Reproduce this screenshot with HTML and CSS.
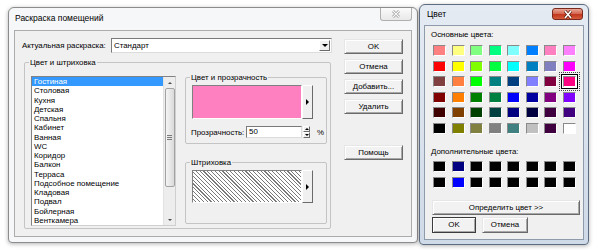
FILE: index.html
```html
<!DOCTYPE html>
<html lang="ru">
<head>
  <meta charset="UTF-8" />
  <title>Раскраска помещений</title>
  <link rel="stylesheet" href="styles.css">
</head>
<body>
  <div class="window room-dialog">
    <div class="titlebar">
      <span class="title">Раскраска помещений</span>
      <span class="close inactive">
        <svg width="10" height="8" viewBox="0 0 10 8"><path d="M2 1L8 7M8 1L2 7" stroke="#9a9a9a" stroke-width="2.6" fill="none"/><path d="M2 1L8 7M8 1L2 7" stroke="#fafafa" stroke-width="1.1" fill="none"/></svg>
      </span>
    </div>
    <div class="client">
      <div class="main">
        <div class="top-row">
          <label class="lbl">Актуальная раскраска:</label>
          <div class="combo">
            <span class="combo-text">Стандарт</span>
            <span class="combo-btn raised"><i class="tri-down"></i></span>
          </div>
        </div>
        <div class="group big">
          <span class="group-title">Цвет и штриховка</span>
          <div class="listbox">
            <ul class="items">
              <li class="sel">Гостиная</li>
              <li>Столовая</li>
              <li>Кухня</li>
              <li>Детская</li>
              <li>Спальня</li>
              <li>Кабинет</li>
              <li>Ванная</li>
              <li>WC</li>
              <li>Коридор</li>
              <li>Балкон</li>
              <li>Терраса</li>
              <li>Подсобное помещение</li>
              <li>Кладовая</li>
              <li>Подвал</li>
              <li>Бойлерная</li>
              <li>Венткамера</li>
            </ul>
            <div class="scrollbar">
              <span class="sb-btn"><i class="sb-up"></i></span>
              <span class="thumb"><i class="grip"></i></span>
              <span class="sb-spacer"></span>
              <span class="sb-btn"><i class="sb-down"></i></span>
            </div>
          </div>
          <div class="side">
            <div class="group sub color-group">
              <span class="group-title">Цвет и прозрачность</span>
              <div class="picker">
                <span class="preview pink"></span>
                <span class="arrow-btn raised"><i class="tri-right"></i></span>
              </div>
              <div class="opacity">
                <span class="op-label">Прозрачность:</span>
                <span class="edit">50</span>
                <span class="spin">
                  <span class="spin-half raised"><i class="spin-up"></i></span>
                  <span class="spin-half raised"><i class="spin-down"></i></span>
                </span>
                <span class="pct">%</span>
              </div>
            </div>
            <div class="group sub hatch-group">
              <span class="group-title">Штриховка</span>
              <div class="picker">
                <span class="preview hatching"></span>
                <span class="arrow-btn raised"><i class="tri-right"></i></span>
              </div>
            </div>
          </div>
        </div>
      </div>
      <div class="buttons">
        <button class="btn">OK</button>
        <button class="btn">Отмена</button>
        <button class="btn">Добавить...</button>
        <button class="btn">Удалить</button>
        <button class="btn help">Помощь</button>
      </div>
    </div>
  </div>

  <div class="window color-dialog">
    <div class="titlebar">
      <span class="title">Цвет</span>
      <span class="close active">
        <svg width="12" height="9" viewBox="0 0 12 9"><path d="M3 1L9 8M9 1L3 8" stroke="#5a1a10" stroke-width="3" fill="none"/><path d="M3 1L9 8M9 1L3 8" stroke="#fff" stroke-width="1.6" fill="none"/></svg>
      </span>
    </div>
    <div class="color-client">
      <div class="cap">Основные цвета:</div>
      <div class="swatches basic">
        <span style="background:#ff8080"></span><span style="background:#ffff80"></span><span style="background:#80ff80"></span><span style="background:#00ff80"></span><span style="background:#80ffff"></span><span style="background:#0080ff"></span><span style="background:#ff80c0"></span><span style="background:#ff80ff"></span>
        <span style="background:#ff0000"></span><span style="background:#ffff00"></span><span style="background:#80ff00"></span><span style="background:#00ff40"></span><span style="background:#00ffff"></span><span style="background:#0080c0"></span><span style="background:#8080c0"></span><span style="background:#ff00ff"></span>
        <span style="background:#804040"></span><span style="background:#ff8040"></span><span style="background:#00ff00"></span><span style="background:#008080"></span><span style="background:#004080"></span><span style="background:#8080ff"></span><span style="background:#800040"></span><span class="picked" style="background:#ff0080"></span>
        <span style="background:#800000"></span><span style="background:#ff8000"></span><span style="background:#008000"></span><span style="background:#008040"></span><span style="background:#0000ff"></span><span style="background:#0000a0"></span><span style="background:#800080"></span><span style="background:#8000ff"></span>
        <span style="background:#400000"></span><span style="background:#804000"></span><span style="background:#004000"></span><span style="background:#004040"></span><span style="background:#000080"></span><span style="background:#000040"></span><span style="background:#400040"></span><span style="background:#400080"></span>
        <span style="background:#000000"></span><span style="background:#808000"></span><span style="background:#808040"></span><span style="background:#808080"></span><span style="background:#408080"></span><span style="background:#c0c0c0"></span><span style="background:#400040"></span><span style="background:#ffffff"></span>
      </div>
      <div class="cap cap-extra">Дополнительные цвета:</div>
      <div class="swatches custom">
        <span></span><span style="background:#000080"></span><span></span><span></span><span></span><span></span><span></span><span></span>
        <span></span><span style="background:#0000ff"></span><span></span><span></span><span></span><span></span><span></span><span></span>
      </div>
      <button class="btn define">Определить цвет &gt;&gt;</button>
      <div class="dlg-row">
        <button class="btn default ok">OK</button>
        <button class="btn cancel">Отмена</button>
      </div>
    </div>
  </div>
</body>
</html>
```

FILE: styles.css
```css
body {
  margin: 0;
  width: 599px;
  height: 250px;
  overflow: hidden;
  position: relative;
  background: #fff;
  font-family: "Liberation Sans", Arial, sans-serif;
  font-size: 7.9px;
  color: #000;
}

/* window frames */
.window {
  position: absolute;
  box-sizing: border-box;
  display: flex;
  flex-direction: column;
  border: 1px solid #8c8c8c;
  border-radius: 6px 6px 4px 4px;
}
.room-dialog {
  left: 8px;
  top: 7px;
  width: 410px;
  height: 236px;
  padding: 0 5px 5px 5px;
  background: #f6f7f9;
  box-shadow: 0 1px 4px rgba(0,0,0,0.3);
}
.color-dialog {
  left: 419px;
  top: 4px;
  width: 170px;
  height: 241px;
  padding: 0 4px 4px 4px;
  border-color: #5d6c80;
  background: linear-gradient(#e4ebf3, #cfdae8);
  box-shadow: 0 1px 4px rgba(0,0,0,0.3);
}
.titlebar {
  flex: none;
  display: flex;
  justify-content: space-between;
  align-items: flex-start;
}
.room-dialog .titlebar { height: 22px; }
.color-dialog .titlebar { height: 20px; }
.title {
  font-size: 8.5px;
  line-height: 21px;
  padding-left: 1px;
}
.color-dialog .title {
  line-height: 19px;
  padding-left: 3px;
}
.close {
  box-sizing: border-box;
  display: flex;
  align-items: center;
  justify-content: center;
}
.close.inactive {
  width: 32px;
  height: 13px;
  border: 1px solid #b0b0b0;
  border-top: none;
  border-radius: 0 0 3px 3px;
  background: linear-gradient(#fbfbfb, #e8e8e8);
}
.close.active {
  width: 31px;
  height: 12px;
  margin: 3px 1px 0 0;
  border: 1px solid #7a2a1c;
  border-radius: 3px;
  background: linear-gradient(#eaa797, #d56a55 45%, #c2391f 55%, #d45a3c);
}

/* left dialog */
.client {
  flex: 1;
  display: flex;
  border: 1px solid #acacac;
  background: #f0f0f0;
}
.main {
  width: 317px;
  box-sizing: border-box;
  padding: 7px 0 0 7px;
}
.top-row {
  display: flex;
  align-items: center;
  height: 15px;
}
.lbl {
  width: 89px;
  white-space: nowrap;
}
.combo {
  box-sizing: border-box;
  width: 221px;
  height: 15px;
  display: flex;
  align-items: center;
  background: #fff;
  border: 1px solid;
  border-color: #7a7a7a #dcdcdc #dcdcdc #7a7a7a;
}
.combo-text {
  flex: 1;
  padding-left: 2px;
}
.combo-btn {
  width: 11px;
  height: 11px;
  margin-right: 1px;
}

.raised {
  box-sizing: border-box;
  display: flex;
  align-items: center;
  justify-content: center;
  background: #f0f0f0;
  border: 1px solid;
  border-color: #fff #6a6a6a #6a6a6a #fff;
}
.tri-down {
  border-left: 3px solid transparent;
  border-right: 3px solid transparent;
  border-top: 3px solid #000;
}
.tri-right {
  border-top: 3px solid transparent;
  border-bottom: 3px solid transparent;
  border-left: 3px solid #000;
}

.group {
  position: relative;
  box-sizing: border-box;
  border: 1px solid #c4c4c4;
  border-radius: 2px;
}
.group-title {
  position: absolute;
  top: -6px;
  left: 4px;
  padding: 0 1px;
  line-height: 11px;
  background: #f0f0f0;
  white-space: nowrap;
}
.group.big {
  margin: 9px 0 0 2px;
  width: 307px;
  height: 167px;
  padding: 13px 3px 2px 6px;
  display: flex;
  gap: 9px;
}

.listbox {
  box-sizing: border-box;
  width: 145px;
  height: 150px;
  display: flex;
  background: #fff;
  border: 1px solid;
  border-color: #828282 #cfcfcf #cfcfcf #828282;
  overflow: hidden;
}
.items {
  flex: 1;
  margin: 0;
  padding: 0;
  list-style: none;
}
.items li {
  line-height: 9.28px;
  height: 9.28px;
  padding-left: 2px;
  white-space: nowrap;
}
.items li.sel {
  background: #3399ff;
  color: #fff;
}
.scrollbar {
  box-sizing: border-box;
  width: 12px;
  display: flex;
  flex-direction: column;
  align-items: center;
  background: #ededed;
  border-left: 1px solid #e2e2e2;
}
.sb-btn {
  flex: none;
  width: 100%;
  height: 11px;
  display: flex;
  align-items: center;
  justify-content: center;
}
.sb-up {
  border-left: 2px solid transparent;
  border-right: 2px solid transparent;
  border-bottom: 2px solid #4a4a4a;
}
.sb-down {
  border-left: 2px solid transparent;
  border-right: 2px solid transparent;
  border-top: 2px solid #4a4a4a;
}
.thumb {
  flex: none;
  box-sizing: border-box;
  width: 10px;
  height: 99px;
  display: flex;
  align-items: center;
  justify-content: center;
  border: 1px solid #a2a2a2;
  border-radius: 2px;
  background: linear-gradient(90deg, #f4f4f4, #dadada);
}
.grip {
  width: 5px;
  height: 5px;
  background: repeating-linear-gradient(#7a7a7a 0 1px, transparent 1px 2px);
}
.sb-spacer { flex: 1; }

.side {
  width: 142px;
  margin-top: 1px;
}
.group.sub { padding: 7px 0 0 6px; }
.color-group { height: 67px; }
.hatch-group {
  height: 62px;
  margin-top: 18px;
}
.picker {
  display: flex;
  height: 34px;
}
.hatch-group .picker { height: 33px; }
.preview {
  box-sizing: border-box;
  width: 110px;
  border: 1px solid;
  border-color: #808080 #fff #fff #808080;
}
.pink { background: #ff80c0; }
.hatching {
  background: repeating-linear-gradient(45deg, #fff 0 1.9px, #7a7a7a 1.9px 2.7px);
}
.arrow-btn { width: 11px; }

.opacity {
  display: flex;
  align-items: center;
  height: 12px;
  margin-top: 7px;
}
.op-label {
  width: 55px;
  margin-left: -1px;
  white-space: nowrap;
}
.edit {
  box-sizing: border-box;
  width: 56px;
  height: 12px;
  line-height: 10px;
  padding-left: 2px;
  background: #fff;
  border: 1px solid;
  border-color: #7a7a7a #dcdcdc #dcdcdc #7a7a7a;
}
.spin {
  width: 7px;
  height: 12px;
  margin-left: 1px;
  display: flex;
  flex-direction: column;
}
.spin-half { flex: 1; }
.spin-up {
  border-left: 2px solid transparent;
  border-right: 2px solid transparent;
  border-bottom: 2px solid #000;
}
.spin-down {
  border-left: 2px solid transparent;
  border-right: 2px solid transparent;
  border-top: 2px solid #000;
}
.pct { margin-left: 7px; }

.buttons {
  width: 59px;
  margin-left: 12px;
  padding-top: 8px;
  display: flex;
  flex-direction: column;
  gap: 5px;
}
.btn {
  font: inherit;
  box-sizing: border-box;
  height: 15px;
  padding: 0;
  color: #000;
  background: #f2f2f2;
  border: 1px solid;
  border-color: #e6e6e6 #6a6a6a #6a6a6a #e6e6e6;
  box-shadow: inset 1px 1px #fff, inset -1px -1px #a8a8a8;
}
.buttons .btn { width: 59px; }
.btn.help { margin-top: 26px; }

/* colour dialog */
.color-client {
  flex: 1;
  display: flex;
  flex-direction: column;
  align-items: flex-start;
  padding: 4px 0 0 6px;
  border: 1px solid #8e9bab;
  background: #f0f0f0;
}
.cap { line-height: 10px; }
.cap-extra { margin-top: 13px; }
.swatches {
  display: grid;
  grid-template-columns: repeat(8, 13px);
  grid-auto-rows: 11px;
  column-gap: 5.57px;
  margin-left: 2px;
}
.swatches.basic {
  row-gap: 4.6px;
  margin-top: 5px;
}
.swatches.custom {
  row-gap: 5px;
  margin-top: 4px;
}
.swatches span {
  box-sizing: border-box;
  background: #000;
  border: 1px solid;
  border-color: #8a8a8a #fff #fff #8a8a8a;
}
.swatches span.picked {
  box-shadow: 0 0 0 1px #fff, 0 0 0 2px #000;
  outline: 1px dotted #444;
  outline-offset: 3px;
}
.btn.define {
  width: 148px;
  margin: 12px 0 0 1px;
}
.dlg-row {
  display: flex;
  gap: 6px;
  margin: 2px 0 0 1px;
}
.dlg-row .btn { height: 16px; }
.btn.ok { width: 44px; }
.btn.cancel { width: 46px; }
.btn.default {
  border-color: #3c3c3c;
}
```
